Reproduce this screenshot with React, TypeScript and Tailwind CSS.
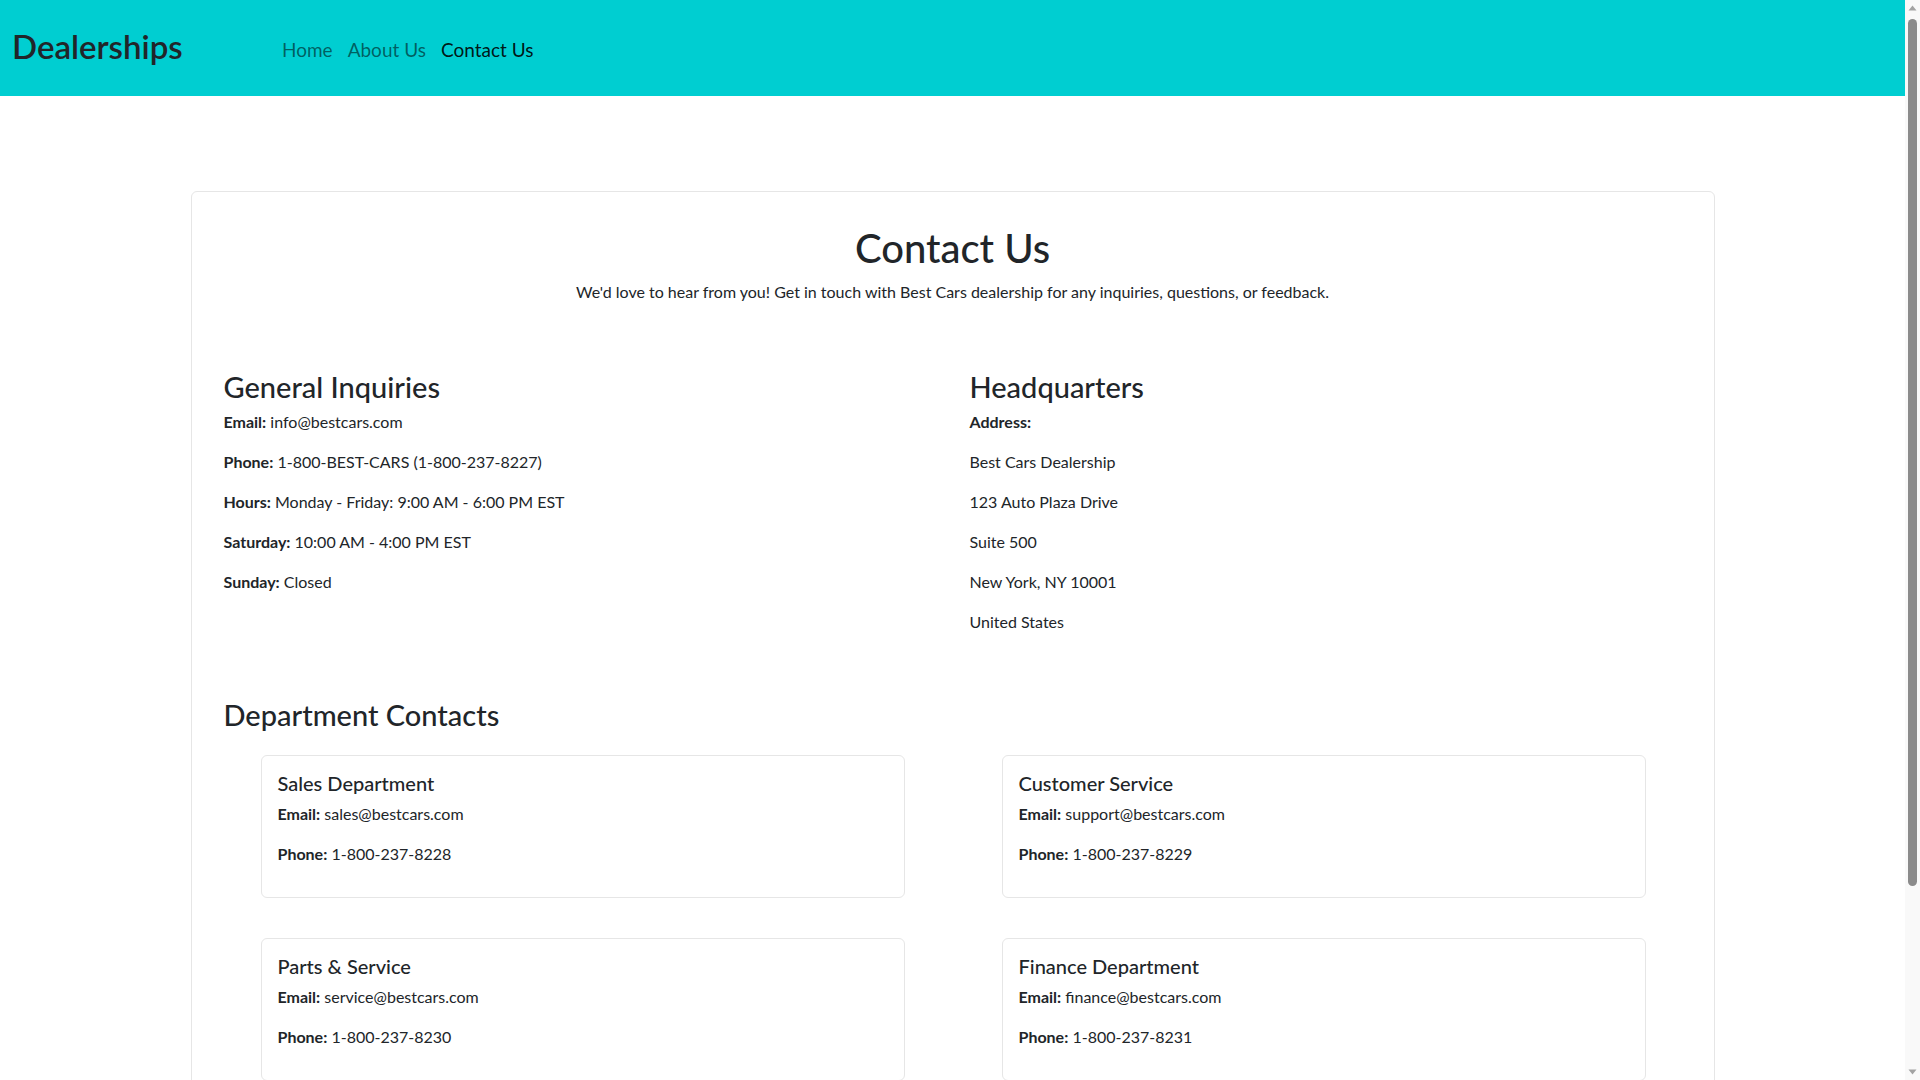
import React from 'react';

const font = { fontFamily: 'Lato, "Noto Sans", sans-serif' };

interface Dept {
    name: string;
    email: string;
    phone: string;
}

const departments: Dept[] = [
    { name: 'Sales Department', email: 'sales@bestcars.com', phone: '1-800-237-8228' },
    { name: 'Customer Service', email: 'support@bestcars.com', phone: '1-800-237-8229' },
    { name: 'Parts & Service', email: 'service@bestcars.com', phone: '1-800-237-8230' },
    { name: 'Finance Department', email: 'finance@bestcars.com', phone: '1-800-237-8231' },
];

function Line({ label, children }: { label?: string; children?: React.ReactNode }) {
    return (
        <p className="text-base leading-6 mb-4">
            {label && <strong className="font-bold">{label}</strong>}
            {label && children ? ' ' : null}
            {children}
        </p>
    );
}

// the browser's classic scrollbar, drawn over the right edge
function Scrollbar() {
    return (
        <div className="fixed top-0 right-0 h-screen w-[15px] bg-[#f9f9f9]">
            <svg className="absolute top-[5px] left-[3px]" width="9" height="6" viewBox="0 0 9 6">
                <path d="M4.5 0.5 L8.5 5.5 L0.5 5.5 Z" fill="#a3a3a3" />
            </svg>
            <div className="absolute top-[19px] left-[3px] w-[9px] h-[867px] rounded-full bg-[#8b8b8b]" />
            <svg className="absolute bottom-[5px] left-[3px]" width="9" height="6" viewBox="0 0 9 6">
                <path d="M0.5 0.5 L8.5 0.5 L4.5 5.5 Z" fill="#a3a3a3" />
            </svg>
        </div>
    );
}

export default function App() {
    return (
        <div className="min-h-screen bg-white text-[#212529] pr-[15px] pb-[187px]" style={font}>
            {/* top navbar */}
            <nav className="h-[96px] bg-[#00ced1] flex items-center px-[12px]">
                <div className="w-[270px] text-[33px] font-semibold leading-none pb-[4px]">Dealerships</div>
                <div className="flex items-center gap-[15px] text-[19px] leading-none pt-[2px]">
                    <a href="#" className="text-black/55">Home</a>
                    <a href="#" className="text-black/55">About Us</a>
                    <a href="#" className="text-black/90">Contact Us</a>
                </div>
            </nav>

            <div className="w-4/5 mx-auto mt-[95px] border border-[#e6e6e6] rounded-md p-[32px] bg-white">
                <h1 className="text-[40px] leading-[48px] font-medium text-center mb-2">Contact Us</h1>
                <p className="text-center text-base leading-6 mb-[66px]">
                    We'd love to hear from you! Get in touch with Best Cars dealership for any inquiries, questions, or feedback.
                </p>

                <div className="grid grid-cols-[746px_1fr]">
                    <div>
                        <h3 className="text-[29px] leading-[33.6px] font-medium mb-[6px]">General Inquiries</h3>
                        <Line label="Email:">info@bestcars.com</Line>
                        <Line label="Phone:">1-800-BEST-CARS (1-800-237-8227)</Line>
                        <Line label="Hours:">Monday - Friday: 9:00 AM - 6:00 PM EST</Line>
                        <Line label="Saturday:">10:00 AM - 4:00 PM EST</Line>
                        <Line label="Sunday:">Closed</Line>
                    </div>
                    <div>
                        <h3 className="text-[29px] leading-[33.6px] font-medium mb-[6px]">Headquarters</h3>
                        <Line label="Address:" />
                        <Line>Best Cars Dealership</Line>
                        <Line>123 Auto Plaza Drive</Line>
                        <Line>Suite 500</Line>
                        <Line>New York, NY 10001</Line>
                        <Line>United States</Line>
                    </div>
                </div>

                <h3 className="text-[29px] leading-[33.6px] font-medium mt-[48px] mb-[24px]">Department Contacts</h3>
                <div className="ml-[37px] grid grid-cols-[644px_644px] gap-x-[97px] gap-y-[40px]">
                    {departments.map((d) => (
                        <div key={d.name} className="border border-[#e6e6e6] rounded-md px-4 py-[15px]">
                            <h5 className="text-[20px] leading-6 font-medium mb-[7px]">{d.name}</h5>
                            <Line label="Email:">{d.email}</Line>
                            <Line label="Phone:">{d.phone}</Line>
                        </div>
                    ))}
                </div>
            </div>
            <Scrollbar />
        </div>
    );
}
